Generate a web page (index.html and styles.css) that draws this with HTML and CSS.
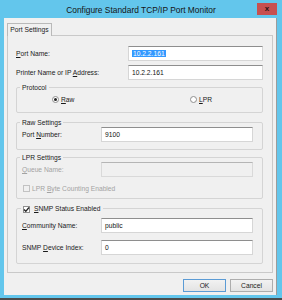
FILE: index.html
```html
<!DOCTYPE html>
<html lang="en">
<head>
    <meta charset="UTF-8">
    <title>Configure Standard TCP/IP Port Monitor</title>
    <link rel="stylesheet" href="styles.css">
</head>
<body>
    <div class="window">
        <div class="titlebar">
            <span class="title">Configure Standard TCP/IP Port Monitor</span>
            <div class="close">x</div>
        </div>
        <div class="client">
            <div class="tabs">
                <div class="tab">Port Settings</div>
            </div>
            <div class="panel">
                <div class="row">
                    <span class="label"><u>P</u>ort Name:</span>
                    <div class="field wide"><span class="selected">10.2.2.161</span></div>
                </div>
                <div class="row row-next">
                    <span class="label">Printer Name or IP <u>A</u>ddress:</span>
                    <div class="field wide">10.2.2.161</div>
                </div>

                <div class="group group-protocol">
                    <div class="group-title">Protocol</div>
                    <div class="radio-row">
                        <div class="option option-raw"><span class="radio checked"></span><span><u>R</u>aw</span></div>
                        <div class="option"><span class="radio"></span><span><u>L</u>PR</span></div>
                    </div>
                </div>

                <div class="group group-raw">
                    <div class="group-title">Raw Settings</div>
                    <div class="row">
                        <span class="label">Port <u>N</u>umber:</span>
                        <div class="field">9100</div>
                    </div>
                </div>

                <div class="group group-lpr">
                    <div class="group-title">LPR Settings</div>
                    <div class="row">
                        <span class="label disabled"><u>Q</u>ueue Name:</span>
                        <div class="field off"></div>
                    </div>
                    <div class="check-row disabled">
                        <span class="checkbox off"></span><span>LPR <u>B</u>yte Counting Enabled</span>
                    </div>
                </div>

                <div class="group group-snmp">
                    <div class="group-title snmp-title">
                        <span class="checkbox">
                            <svg width="7" height="7" viewBox="0 0 7 7"><polyline points="1,3.5 2.8,5.3 6,1.5" fill="none" stroke="#222" stroke-width="1.3"/></svg>
                        </span><span><u>S</u>NMP Status Enabled</span>
                    </div>
                    <div class="row row-community">
                        <span class="label"><u>C</u>ommunity Name:</span>
                        <div class="field">public</div>
                    </div>
                    <div class="row row-index">
                        <span class="label">SNMP <u>D</u>evice Index:</span>
                        <div class="field">0</div>
                    </div>
                </div>
            </div>
            <div class="buttons">
                <div class="button default">OK</div>
                <div class="button">Cancel</div>
            </div>
        </div>
    </div>
</body>
</html>
```

FILE: styles.css
```css
body {
    margin: 0;
    font-family: "Liberation Sans", Arial, sans-serif;
    font-size: 6.7px;
    color: #1a1a1a;
}
.window {
    position: relative;
    width: 282px;
    height: 298px;
    background: #63c6ec;
    border-bottom: 2px solid #4b4b4b;
}
.titlebar {
    height: 18px;
    display: flex;
    align-items: center;
    justify-content: center;
}
.title {
    font-size: 8.4px;
    color: #151515;
    margin-top: 2px;
}
.close {
    position: absolute;
    top: 3px;
    right: 5px;
    width: 20px;
    height: 12px;
    background: #c75050;
    color: #2a1414;
    font-size: 8px;
    font-weight: bold;
    line-height: 11px;
    text-align: center;
}
.client {
    margin-left: 4px;
    width: 269px;
    height: 272px;
    padding: 5px 0 0 3px;
    background: #f0f0f0;
    border-right: 1px solid #9c9c9c;
}
.tabs {
    display: flex;
}
.tab {
    position: relative;
    z-index: 1;
    width: 45px;
    height: 13px;
    margin-bottom: -1px;
    box-sizing: border-box;
    border: 1px solid #b9b9b9;
    border-bottom: none;
    background: #f0f0f0;
    text-align: center;
    line-height: 12px;
}
.panel {
    width: 266px;
    height: 238px;
    box-sizing: border-box;
    border: 1px solid #c9c9c9;
    padding: 10px 9px 0 8px;
}
.row {
    display: flex;
    align-items: center;
    justify-content: space-between;
    height: 15px;
}
.row-next {
    margin-top: 4px;
}
.field {
    width: 152px;
    height: 15px;
    box-sizing: border-box;
    border: 1px solid #d6d6d6;
    border-top-color: #8e8e8e;
    background: #fff;
    padding-left: 3px;
    line-height: 13px;
    color: #111;
}
.field.wide {
    width: 135px;
}
.field.off {
    background: #f0f0f0;
    border-color: #d9d9d9;
    border-top-color: #b5b5b5;
}
.selected {
    background: #3399ff;
    color: #fff;
    padding: 0 1px;
}
.disabled {
    color: #a3a3a3;
}
.group {
    box-sizing: border-box;
    border: 1px solid #d4d4d4;
    border-radius: 2px;
    padding: 0 9px 0 5px;
}
.group-title {
    width: max-content;
    margin: -4px 0 0 -2px;
    padding: 0 2px;
    line-height: 8px;
    background: #f0f0f0;
}
.group-protocol {
    margin-top: 7px;
    height: 26px;
}
.group-raw {
    margin-top: 9px;
    height: 28px;
}
.group-lpr {
    margin-top: 7px;
    height: 42px;
}
.group-snmp {
    margin-top: 9px;
    height: 56px;
}
.radio-row {
    display: flex;
    align-items: center;
    height: 10px;
    margin-top: 2px;
    padding-left: 30px;
}
.option {
    display: flex;
    align-items: center;
    gap: 2px;
}
.option-raw {
    width: 138px;
}
.radio {
    width: 7px;
    height: 7px;
    box-sizing: border-box;
    border: 1px solid #8f8f8f;
    border-radius: 50%;
    background: #fff;
    display: flex;
    align-items: center;
    justify-content: center;
}
.radio.checked::after {
    content: "";
    width: 3px;
    height: 3px;
    border-radius: 50%;
    background: #222;
}
.check-row {
    display: flex;
    align-items: center;
    gap: 2px;
    height: 10px;
    margin-top: 6px;
    padding-left: 1px;
}
.checkbox {
    width: 7px;
    height: 7px;
    box-sizing: border-box;
    border: 1px solid #8f8f8f;
    background: #fff;
    display: flex;
    align-items: center;
    justify-content: center;
}
.checkbox svg {
    flex: none;
}
.checkbox.off {
    border-color: #c2c2c2;
    background: #f0f0f0;
}
.snmp-title {
    display: flex;
    align-items: center;
    gap: 4px;
    margin-left: -1px;
    padding: 0 3px 0 2px;
    line-height: 8px;
}
.row-community {
    margin-top: 5px;
}
.row-index {
    margin-top: 7px;
}
.buttons {
    display: flex;
    justify-content: flex-end;
    gap: 4px;
    margin-top: 6px;
    padding-right: 3px;
}
.button {
    width: 43px;
    height: 13px;
    box-sizing: border-box;
    border: 1px solid #adadad;
    background: linear-gradient(#f2f2f2, #e3e3e3);
    text-align: center;
    line-height: 11px;
    color: #1a1a1a;
}
.button.default {
    border-color: #5b9bd5;
}
```
